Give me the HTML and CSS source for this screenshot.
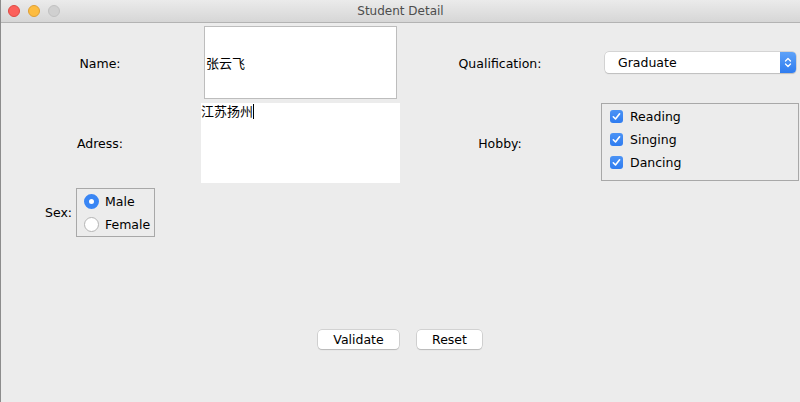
FILE: index.html
```html
<!DOCTYPE html>
<html>
<head>
<meta charset="utf-8">
<title>Student Detail</title>
<link rel="stylesheet" href="styles.css">
</head>
<body>
<div class="window">
  <div class="titlebar">
    <div class="lights">
      <span class="light red"></span>
      <span class="light yellow"></span>
      <span class="light gray"></span>
    </div>
    <div class="title">Student Detail</div>
  </div>
  <div class="form">
    <div class="cell label">Name:</div>
    <div class="cell"><div class="namefield">张云飞</div></div>
    <div class="cell label">Qualification:</div>
    <div class="cell combo-cell">
      <div class="combo">
        <span class="combo-text">Graduate</span>
        <span class="combo-arrow">
          <svg width="8" height="13" viewBox="0 0 8 13"><path d="M1.5 5 L4 2.5 L6.5 5 M1.5 8 L4 10.5 L6.5 8" fill="none" stroke="#fff" stroke-width="1.3" stroke-linecap="round" stroke-linejoin="round"/></svg>
        </span>
      </div>
    </div>

    <div class="cell label">Adress:</div>
    <div class="cell"><div class="address">江苏扬州<span class="caret"></span></div></div>
    <div class="cell label">Hobby:</div>
    <div class="cell"><div class="hobbies">
      <div class="check-row"><span class="checkbox"><svg width="13" height="13" viewBox="0 0 13 13"><path d="M3.3 6.8 L5.5 9 L9.6 3.8" fill="none" stroke="#fff" stroke-width="1.6" stroke-linecap="round" stroke-linejoin="round"/></svg></span>Reading</div>
      <div class="check-row"><span class="checkbox"><svg width="13" height="13" viewBox="0 0 13 13"><path d="M3.3 6.8 L5.5 9 L9.6 3.8" fill="none" stroke="#fff" stroke-width="1.6" stroke-linecap="round" stroke-linejoin="round"/></svg></span>Singing</div>
      <div class="check-row"><span class="checkbox"><svg width="13" height="13" viewBox="0 0 13 13"><path d="M3.3 6.8 L5.5 9 L9.6 3.8" fill="none" stroke="#fff" stroke-width="1.6" stroke-linecap="round" stroke-linejoin="round"/></svg></span>Dancing</div>
    </div></div>

    <div class="cell sex-cell">
      <span class="sex-label">Sex:</span>
      <div class="radios">
        <div class="radio-row"><span class="radio on"></span>Male</div>
        <div class="radio-row"><span class="radio"></span>Female</div>
      </div>
    </div>
  </div>
  <div class="buttons">
    <button class="btn validate">Validate</button>
    <button class="btn reset">Reset</button>
  </div>
</div>
</body>
</html>
```
FILE: styles.css
```css
html, body {
  margin: 0;
  padding: 0;
  background: #ececec;
}
body {
  font-family: "DejaVu Sans", "Noto Sans CJK SC", sans-serif;
  font-size: 12.5px;
  color: #000;
}
.window {
  width: 800px;
  height: 402px;
  background: #ececec;
  border-left: 1px solid #8c8c8c;
  box-sizing: border-box;
  overflow: hidden;
}
.titlebar {
  height: 23px;
  box-sizing: border-box;
  background: linear-gradient(#ebebeb, #d6d6d6);
  border-bottom: 1px solid #b3b3b3;
  display: flex;
  align-items: center;
  position: relative;
}
.lights {
  display: flex;
  gap: 8px;
  padding-left: 7px;
}
.light {
  width: 12px;
  height: 12px;
  border-radius: 50%;
  box-sizing: border-box;
}
.red { background: #fc605b; border: 1px solid #de4a43; }
.yellow { background: #fdbc40; border: 1px solid #de9f34; }
.gray { background: #d0d0d0; border: 1px solid #c1c1c1; }
.title {
  position: absolute;
  left: 0;
  right: 0;
  text-align: center;
  color: #4d4d4d;
  font-family: "DejaVu Sans", sans-serif;
  font-size: 12px;
  pointer-events: none;
}
.form {
  display: grid;
  grid-template-columns: 200px 200px 200px 200px;
  grid-template-rows: 80px 80px 80px;
  margin-left: -1px;
}
.cell {
  display: flex;
  min-width: 0;
}
.label {
  align-items: center;
  justify-content: center;
}
.namefield {
  margin: 3px 3px 4px 4px;
  flex: 1;
  background: #fff;
  border: 1px solid #bdbdbd;
  display: flex;
  align-items: center;
  padding-left: 1px;
  font-family: "Noto Sans CJK SC", sans-serif;
  font-size: 13px;
}
.address {
  margin-left: 1px;
  width: 200px;
  background: #fff;
  font-family: "Noto Sans CJK SC", sans-serif;
  font-size: 13px;
  line-height: 16px;
  display: flex;
  align-items: flex-start;
}
.caret {
  display: inline-block;
  width: 1px;
  height: 15px;
  background: #000;
  margin-top: 1px;
}
.combo-cell {
  align-items: center;
}
.combo {
  margin-left: 5px;
  width: 191px;
  height: 21px;
  box-sizing: border-box;
  background: #fff;
  border-radius: 4px;
  box-shadow: 0 0 0 0.5px #bcbcbc, 0 1px 1px rgba(0,0,0,0.18);
  display: flex;
  align-items: center;
  justify-content: space-between;
  margin-top: -1px;
}
.combo-text {
  padding-left: 13px;
}
.combo-arrow {
  width: 16px;
  height: 21px;
  border-radius: 0 4px 4px 0;
  background: linear-gradient(#5ea2f8, #2f7cf0);
  display: flex;
  align-items: center;
  justify-content: center;
}
.hobbies {
  margin: 0 1px 2px 1px;
  flex: 1;
  border: 1px solid #a8a8a8;
  padding: 6px 0 0 8px;
  display: flex;
  flex-direction: column;
  gap: 10px;
}
.check-row {
  display: flex;
  align-items: center;
  gap: 7px;
  height: 13px;
}
.checkbox {
  width: 13px;
  height: 13px;
  border-radius: 3px;
  background: linear-gradient(#4b93f5, #2f7cf0);
  display: flex;
}
.sex-cell {
  justify-content: center;
  align-items: flex-start;
  padding-top: 5px;
  gap: 4px;
}
.sex-label {
  align-self: flex-start;
  margin-top: 17px;
}
.radios {
  width: 79px;
  height: 49px;
  box-sizing: border-box;
  border: 1px solid #a8a8a8;
  padding: 5px 0 0 7px;
  display: flex;
  flex-direction: column;
  gap: 8px;
}
.radio-row {
  display: flex;
  align-items: center;
  gap: 6px;
  height: 15px;
}
.radio {
  width: 15px;
  height: 15px;
  border-radius: 50%;
  box-sizing: border-box;
  background: #fff;
  border: 1px solid #b4b4b4;
}
.radio.on {
  border: 5px solid #3a86f4;
  background: #fff;
}
.buttons {
  display: flex;
  justify-content: center;
  gap: 18px;
  margin-top: 67px;
  margin-left: -1px;
}
.btn {
  font-family: "DejaVu Sans", sans-serif;
  font-size: 12.5px;
  color: #000;
  height: 19px;
  padding: 0;
  background: #fff;
  border: none;
  border-radius: 4px;
  box-shadow: 0 0 0 0.5px #b8b8b8, 0 1px 1px rgba(0,0,0,0.2);
}
.validate { width: 81px; }
.reset { width: 65px; }
```
